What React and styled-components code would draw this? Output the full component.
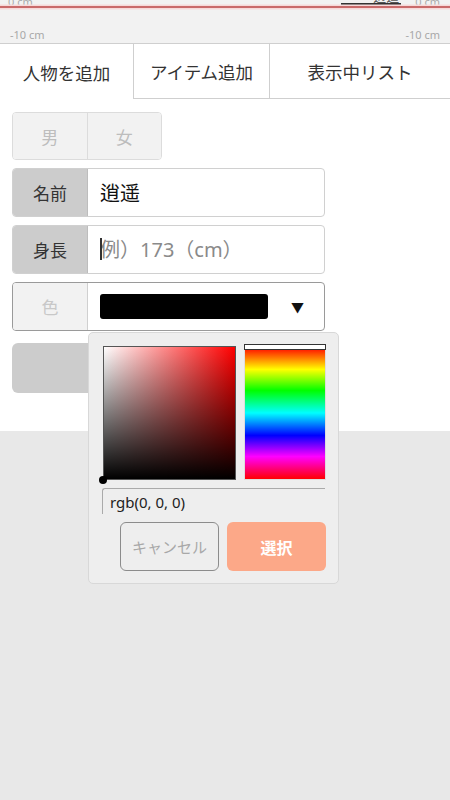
import React, { useState } from 'react';
import styled, { createGlobalStyle } from 'styled-components';

const GlobalStyle = createGlobalStyle`
  html, body {
    margin: 0;
    padding: 0;
    background: #e8e8e8;
  }
  * {
    box-sizing: border-box;
  }
  body {
    font-family: 'Noto Sans', 'Noto Sans CJK JP', sans-serif;
  }
`;

const FONT = `'Noto Sans', 'Noto Sans CJK JP', sans-serif`;

export default function App() {
  const [gender, setGender] = useState(null);
  const [name, setName] = useState('逍遥');
  const [height, setHeight] = useState('');

  return (
    <Page>
      <GlobalStyle />
      <Ruler>
        <RulerTop>
          <RulerLabel>0 cm</RulerLabel>
          <RulerRight>
            <PersonMark>逍遥</PersonMark>
            <RulerLabel>0 cm</RulerLabel>
          </RulerRight>
        </RulerTop>
        <RedLine />
        <RulerBottom>
          <SmallLabel>-10 cm</SmallLabel>
          <SmallLabel>-10 cm</SmallLabel>
        </RulerBottom>
      </Ruler>

      <Tabs>
        <Tab active width={134}>人物を追加</Tab>
        <Tab width={136}>アイテム追加</Tab>
        <Tab last width={180}>表示中リスト</Tab>
      </Tabs>

      <Panel>
        <Toggle>
          <ToggleBtn onClick={() => setGender('m')}>男</ToggleBtn>
          <ToggleBtn onClick={() => setGender('f')}>女</ToggleBtn>
        </Toggle>

        <Row>
          <Label>名前</Label>
          <Field value={name} onChange={e => setName(e.target.value)} />
        </Row>

        <Row>
          <Label>身長</Label>
          <FieldWrap>
            <Caret />
            <Field
              placeholder="例）173（cm）"
              value={height}
              onChange={e => setHeight(e.target.value)}
            />
          </FieldWrap>
        </Row>

        <Row dark>
          <Label muted>色</Label>
          <ColorSelect>
            <Swatch />
            <Arrow>▼</Arrow>
          </ColorSelect>

          <Popover>
            <PickerArea>
              <SatBox>
                <SatCursor />
              </SatBox>
              <HueBar>
                <HueCursor />
              </HueBar>
            </PickerArea>
            <ValueInput readOnly value="rgb(0, 0, 0)" />
            <Actions>
              <CancelBtn>キャンセル</CancelBtn>
              <SelectBtn>選択</SelectBtn>
            </Actions>
          </Popover>
        </Row>

        <SubmitBtn />
      </Panel>
    </Page>
  );
}

const Page = styled.div`
  width: 450px;
  min-height: 800px;
  background: #e8e8e8;
  overflow: hidden;
  font-family: ${FONT};
`;

const Ruler = styled.div`
  height: 44px;
  background: #f2f2f2;
  border-bottom: 1px solid #cfcfcf;
  display: flex;
  flex-direction: column;
  overflow: hidden;
`;

const RulerTop = styled.div`
  display: flex;
  justify-content: space-between;
  align-items: flex-end;
  height: 5px;
  padding: 0 10px 0 8px;
`;

const RulerRight = styled.div`
  display: flex;
  align-items: flex-end;
  gap: 14px;
`;

const RulerLabel = styled.span`
  font-size: 11px;
  line-height: 11px;
  color: #aaa;
  margin-bottom: -2px;
`;

const PersonMark = styled.span`
  width: 60px;
  font-size: 13px;
  line-height: 13px;
  color: #555;
  text-align: right;
  padding-right: 2px;
  border-bottom: 2px solid #333;
`;

const RedLine = styled.div`
  height: 2px;
  margin-top: 1px;
  background: #c96a6a;
  box-shadow: 0 0 0 1.5px #f6d9d9;
`;

const RulerBottom = styled.div`
  display: flex;
  justify-content: space-between;
  margin-top: auto;
  padding: 0 10px 1px 10px;
`;

const SmallLabel = styled.span`
  font-size: 11px;
  color: #a8a8a8;
`;

const Tabs = styled.div`
  display: flex;
  height: 55px;
  background: #fff;
`;

const Tab = styled.div`
  width: ${p => p.width}px;
  display: flex;
  align-items: center;
  justify-content: center;
  font-size: 17.5px;
  color: #333;
  border-right: ${p => (p.last ? 'none' : '1px solid #cfcfcf')};
  border-bottom: ${p => (p.active ? 'none' : '1px solid #cfcfcf')};
  padding-top: 1px;
`;

const Panel = styled.div`
  background: #fff;
  padding: 13px 0 38px 12px;
  display: flex;
  flex-direction: column;
  gap: 8px;
`;

const Toggle = styled.div`
  display: flex;
  width: 150px;
  height: 48px;
  border: 1px solid #dcdcdc;
  border-radius: 4px;
  overflow: hidden;
`;

const ToggleBtn = styled.button`
  flex: 1;
  border: none;
  background: #f2f2f2;
  color: #bdbdbd;
  font-family: ${FONT};
  font-size: 17px;
  & + & {
    border-left: 1px solid #dcdcdc;
  }
`;

const Row = styled.div`
  position: relative;
  display: flex;
  width: 313px;
  height: 49px;
  border: 1px solid ${p => (p.dark ? '#9a9a9a' : '#d0d0d0')};
  border-radius: 4px;
`;

const Label = styled.div`
  width: 75px;
  flex-shrink: 0;
  display: flex;
  align-items: center;
  justify-content: center;
  background: ${p => (p.muted ? '#f2f2f2' : '#cccccc')};
  color: ${p => (p.muted ? '#c8c8c8' : '#333')};
  font-size: 17px;
  border-right: 1px solid ${p => (p.muted ? '#d0d0d0' : '#bdbdbd')};
  border-radius: 3px 0 0 3px;
`;

const FieldWrap = styled.div`
  position: relative;
  flex: 1;
  display: flex;
`;

const Caret = styled.span`
  position: absolute;
  left: 12px;
  top: 12px;
  width: 1.5px;
  height: 22px;
  background: #333;
`;

const Field = styled.input`
  flex: 1;
  min-width: 0;
  border: none;
  outline: none;
  background: transparent;
  padding: 0 0 0 12px;
  font-family: ${FONT};
  font-size: 20px;
  color: #111;
  &::placeholder {
    color: #8a8a8a;
  }
`;

const ColorSelect = styled.div`
  flex: 1;
  display: flex;
  align-items: center;
  padding: 0 17px 0 12px;
  gap: 23px;
`;

const Swatch = styled.div`
  width: 168px;
  height: 25px;
  background: #000;
  border-radius: 3px;
`;

const Arrow = styled.span`
  font-size: 13px;
  color: #111;
`;

const Popover = styled.div`
  position: absolute;
  left: 75px;
  top: 49px;
  z-index: 5;
  width: 251px;
  height: 252px;
  background: #eeeeee;
  border: 1px solid #d8d8d8;
  border-radius: 5px;
  padding: 13px 12px 12px 14px;
  display: flex;
  flex-direction: column;
`;

const PickerArea = styled.div`
  display: flex;
  gap: 8px;
  height: 134px;
`;

const SatBox = styled.div`
  position: relative;
  width: 133px;
  height: 134px;
  border: 1px solid #555;
  background: linear-gradient(to top, #000, rgba(0, 0, 0, 0)),
    linear-gradient(to right, #fff, #f00);
`;

const SatCursor = styled.span`
  position: absolute;
  left: -5px;
  bottom: -5px;
  width: 8px;
  height: 8px;
  border-radius: 50%;
  background: #000;
`;

const HueBar = styled.div`
  position: relative;
  flex: 1;
  border: 1px solid #ddd;
  background: linear-gradient(
    to bottom,
    #f00 0%,
    #ff0 17%,
    #0f0 33%,
    #0ff 50%,
    #00f 67%,
    #f0f 83%,
    #f00 100%
  );
`;

const HueCursor = styled.span`
  position: absolute;
  left: -1px;
  right: -1px;
  top: -3px;
  height: 6px;
  background: #fff;
  border: 1px solid #333;
`;

const ValueInput = styled.input`
  margin-top: 8px;
  height: 27px;
  width: 100%;
  margin-left: -1px;
  border: none;
  border-top: 1px solid #aaa;
  border-left: 1px solid #aaa;
  border-radius: 3px 0 0 0;
  background: #eeeeee;
  padding: 0 0 0 7px;
  font-family: ${FONT};
  font-size: 15px;
  color: #222;
  outline: none;
`;

const Actions = styled.div`
  margin-top: 8px;
  display: flex;
  justify-content: flex-end;
  gap: 8px;
`;

const CancelBtn = styled.button`
  width: 99px;
  height: 49px;
  border: 1px solid #8c8c8c;
  border-radius: 6px;
  background: #eeeeee;
  color: #a8a8a8;
  font-family: ${FONT};
  font-size: 15px;
`;

const SelectBtn = styled.button`
  width: 99px;
  height: 49px;
  border: none;
  border-radius: 6px;
  background: #fca888;
  color: #fff;
  font-family: ${FONT};
  font-weight: bold;
  font-size: 16px;
`;

const SubmitBtn = styled.button`
  margin-top: 4px;
  width: 313px;
  height: 50px;
  border: none;
  border-radius: 6px;
  background: #cccccc;
`;
